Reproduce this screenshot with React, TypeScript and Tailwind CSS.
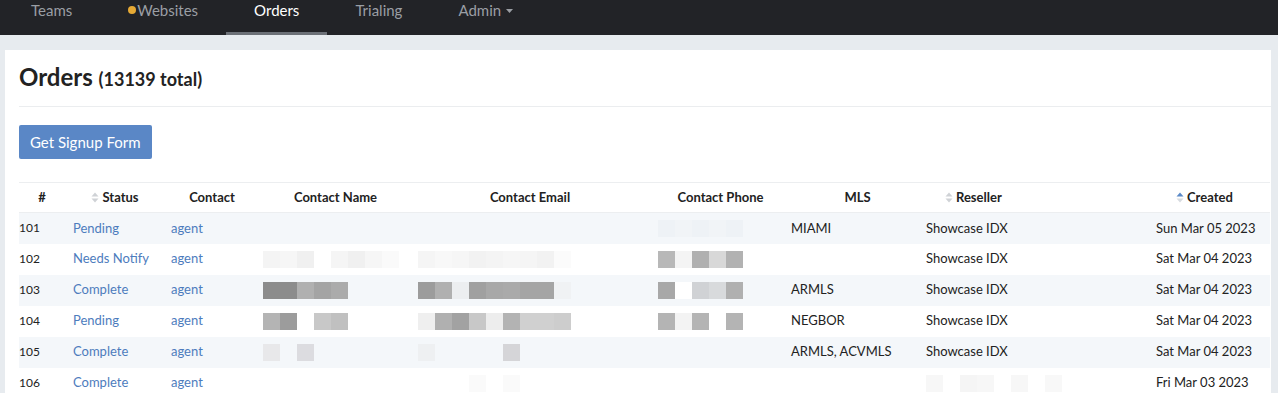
import React from 'react';

type Row = {
    id: number;
    status: string;
    mls: string;
    reseller: boolean;
    created: string;
    name: string[];
    email: string[];
    phone: string[];
};

// pixelated placeholders for the redacted columns, one class per 17px cell
const rows: Row[] = [
    {
        id: 101, status: 'Pending', mls: 'MIAMI', reseller: true, created: 'Sun Mar 05 2023',
        name: [], email: [],
        phone: ['bg-[#eef2f6]', 'bg-[#f1f4f7]', 'bg-[#eef2f6]', 'bg-[#f1f4f7]', 'bg-[#eef2f6]'],
    },
    {
        id: 102, status: 'Needs Notify', mls: '', reseller: true, created: 'Sat Mar 04 2023',
        name: ['bg-[#f4f4f4]', 'bg-[#f6f6f6]', 'bg-[#f0f0f0]', 'bg-white', 'bg-[#f5f5f5]', 'bg-[#f0f0f0]', 'bg-[#f6f6f6]', 'bg-[#fafafa]'],
        email: ['bg-[#f5f5f5]', 'bg-[#f8f8f8]', 'bg-[#f6f6f6]', 'bg-[#f2f2f2]', 'bg-[#f4f4f4]', 'bg-[#f6f6f6]', 'bg-[#f5f5f5]', 'bg-[#f2f2f2]', 'bg-[#fbfbfb]'],
        phone: ['bg-[#b8b8b8]', 'bg-[#f4f4f4]', 'bg-[#b0b0b0]', 'bg-[#d8d8d8]', 'bg-[#b2b2b2]'],
    },
    {
        id: 103, status: 'Complete', mls: 'ARMLS', reseller: true, created: 'Sat Mar 04 2023',
        name: ['bg-[#8c8c8c]', 'bg-[#8c8c8c]', 'bg-[#b0b0b0]', 'bg-[#a4a4a4]', 'bg-[#ababab]'],
        email: ['bg-[#9c9c9c]', 'bg-[#b0b0b0]', 'bg-[#eceef0]', 'bg-[#a0a0a0]', 'bg-[#a8a8a8]', 'bg-[#aaaaaa]', 'bg-[#a5a5a5]', 'bg-[#a5a5a5]', 'bg-[#f0f2f4]'],
        phone: ['bg-[#a8a8a8]', 'bg-white', 'bg-[#d0d2d5]', 'bg-[#d8dadc]', 'bg-[#b0b0b0]'],
    },
    {
        id: 104, status: 'Pending', mls: 'NEGBOR', reseller: true, created: 'Sat Mar 04 2023',
        name: ['bg-[#b4b4b4]', 'bg-[#9c9c9c]', 'bg-white', 'bg-[#c8c8c8]', 'bg-[#c0c0c0]'],
        email: ['bg-[#efefef]', 'bg-[#b0b0b0]', 'bg-[#a2a2a2]', 'bg-[#c8c8c8]', 'bg-[#ededed]', 'bg-[#b3b3b3]', 'bg-[#d0d0d0]', 'bg-[#d0d0d0]', 'bg-[#cdcdcd]'],
        phone: ['bg-[#b4b4b4]', 'bg-[#f3f3f3]', 'bg-[#b4b4b4]', 'bg-white', 'bg-[#b4b4b4]'],
    },
    {
        id: 105, status: 'Complete', mls: 'ARMLS, ACVMLS', reseller: true, created: 'Sat Mar 04 2023',
        name: ['bg-[#e8e8ea]', '', 'bg-[#dcdce0]'],
        email: ['bg-[#eef0f2]', '', '', '', '', 'bg-[#d5d5d8]'],
        phone: [],
    },
    {
        id: 106, status: 'Complete', mls: '', reseller: false, created: 'Fri Mar 03 2023',
        name: [], email: ['', '', '', 'bg-[#fafafa]', '', 'bg-[#fafafa]'], phone: [],
    },
];

function Blocks({ cells }: { cells: string[] }) {
    return (
        <div className="flex">
            {cells.map((c, i) => (
                <div key={i} className={`w-[17px] h-[17px] ${c}`} />
            ))}
        </div>
    );
}

function SortIcon({ active }: { active?: boolean }) {
    return (
        <svg width="8" height="11" viewBox="0 0 8 11" className="mr-[3px] shrink-0">
            <path d="M4 0.5 L7.5 4.5 L0.5 4.5 Z" fill={active ? '#5b8ac8' : '#cfd2d6'} />
            <path d="M4 10.5 L7.5 6.5 L0.5 6.5 Z" fill={active ? '#d7dbe0' : '#cfd2d6'} />
        </svg>
    );
}

export default function App() {
    const navItems = ['Teams', 'Websites', 'Orders', 'Trialing', 'Admin'];

    return (
        <div className="w-[1278px] h-[393px] overflow-hidden bg-[#e7ebef] font-['Lato','Liberation_Sans',sans-serif] text-[#222]">
            {/* Top nav */}
            <nav className="h-[35px] bg-[#222327] flex pl-[3px]">
                {navItems.map(item => (
                    <div
                        key={item}
                        className={`px-[28px] h-full flex items-start pt-0 text-[15px] leading-[20px] border-b-[3px] ${
                            item === 'Orders' ? 'text-white border-[#6c7077]' : 'text-[#9a9ea4] border-transparent'
                        }`}
                    >
                        {item === 'Websites' && <span className="w-[8px] h-[8px] rounded-full bg-[#e6a935] mt-[6px] mr-[1px]" />}
                        {item}
                        {item === 'Admin' && (
                            <svg width="7" height="4" viewBox="0 0 7 4" className="ml-[5px] mt-[9px]">
                                <path d="M0 0 L7 0 L3.5 4 Z" fill="#9a9ea4" />
                            </svg>
                        )}
                    </div>
                ))}
            </nav>

            {/* Content panel */}
            <div className="mt-[15px] ml-[5px] w-[1266px] h-[400px] bg-white pl-[14px] pt-[11px]">
                <h1 className="text-[24px] leading-[32px] font-bold pb-[11px] border-b border-[#ebedef]">
                    Orders <span className="text-[18px]">(13139 total)</span>
                </h1>

                <button className="mt-[18px] h-[34px] px-[11px] bg-[#5a87c6] text-white text-[15px] rounded-[2px]">
                    Get Signup Form
                </button>

                <table className="mt-[23px] w-[1251px] table-fixed border-collapse text-[13px]">
                    <colgroup>
                        <col className="w-[46px]" />
                        <col className="w-[98px]" />
                        <col className="w-[92px]" />
                        <col className="w-[155px]" />
                        <col className="w-[240px]" />
                        <col className="w-[133px]" />
                        <col className="w-[135px]" />
                        <col className="w-[230px]" />
                        <col className="w-[122px]" />
                    </colgroup>
                    <thead>
                        <tr className="h-[30px] border-t border-[#eceef0] border-b border-[#e6eaee] font-bold">
                            <th className="text-center">#</th>
                            <th>
                                <div className="flex items-center justify-center pl-[2px]"><SortIcon />Status</div>
                            </th>
                            <th className="text-center pl-[6px]">Contact</th>
                            <th className="text-center pl-[6px]">Contact Name</th>
                            <th className="text-center">Contact Email</th>
                            <th className="text-center pl-[8px]">Contact Phone</th>
                            <th className="text-center pl-[14px]">MLS</th>
                            <th>
                                <div className="flex items-center pl-[27px]"><SortIcon />Reseller</div>
                            </th>
                            <th>
                                <div className="flex items-center pl-[28px]"><SortIcon active />Created</div>
                            </th>
                        </tr>
                    </thead>
                    <tbody>
                        {rows.map((r, i) => (
                            <tr key={r.id} className={`h-[31px] ${i % 2 === 0 ? 'bg-[#f4f7fa]' : 'bg-white'}`}>
                                <td className="text-[12px]">{r.id}</td>
                                <td className="pl-[8px] text-[#4d7cbd]">{r.status}</td>
                                <td className="pl-[8px] text-[#4d7cbd]">agent</td>
                                <td className="pl-[8px]"><Blocks cells={r.name} /></td>
                                <td className="pl-[8px]"><Blocks cells={r.email} /></td>
                                <td className="pl-[8px]"><Blocks cells={r.phone} /></td>
                                <td className="pl-[8px]">{r.mls}</td>
                                <td className="pl-[8px]">
                                    {r.reseller ? 'Showcase IDX' : <Blocks cells={['bg-[#f7f7f7]', '', 'bg-[#f5f5f5]', 'bg-[#f7f7f7]', '', 'bg-[#f7f7f7]', '', 'bg-[#f8f8f8]']} />}
                                </td>
                                <td className="pl-[8px]">{r.created}</td>
                            </tr>
                        ))}
                    </tbody>
                </table>
            </div>
        </div>
    );
}
